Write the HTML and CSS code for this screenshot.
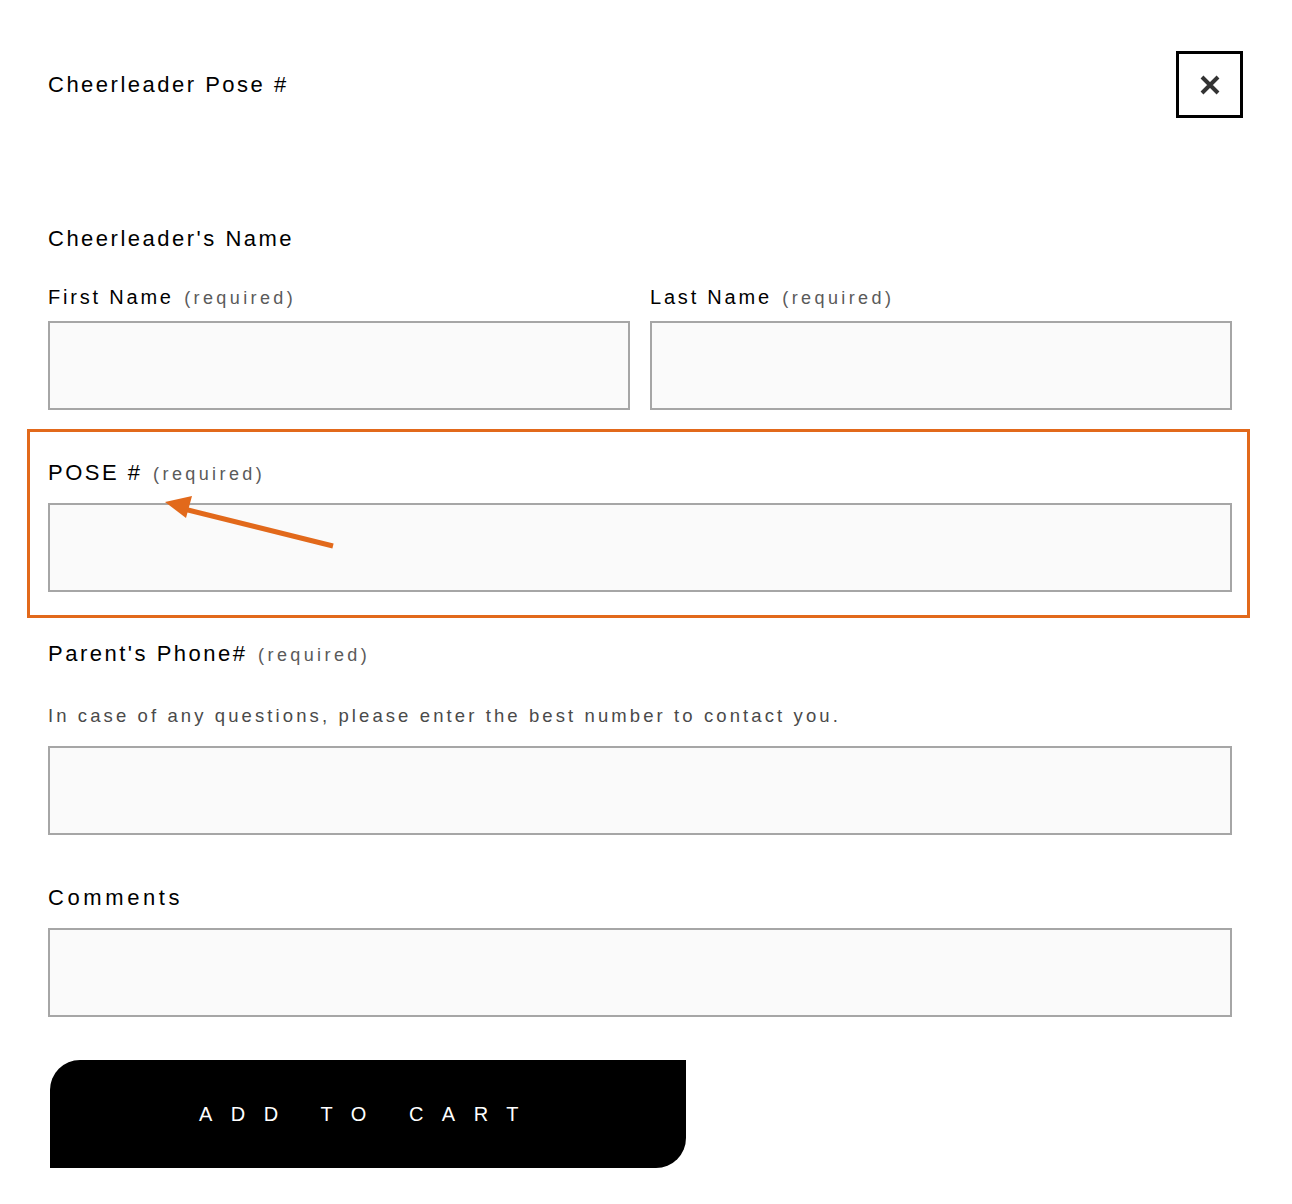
FILE: index.html
```html
<!DOCTYPE html>
<html lang="en">
<head>
  <meta charset="UTF-8">
  <meta name="viewport" content="width=device-width, initial-scale=1.0">
  <title>Cheerleader Pose #</title>
  <link rel="stylesheet" href="styles.css">
</head>
<body>

<div class="modal">

  <!-- Header -->
  <div class="modal-head">
    <h2 class="modal-title">Cheerleader Pose #</h2>
    <button class="close-btn" type="button" aria-label="Close">
      <svg width="20" height="20" viewBox="0 0 20 20">
        <path d="M2 2 L18 18 M18 2 L2 18" stroke="#333" stroke-width="4" stroke-linecap="butt" fill="none"/>
      </svg>
    </button>
  </div>

  <!-- Form -->
  <form class="form">

    <div class="name-group">
      <div class="group-title">Cheerleader's Name</div>
      <div class="name-row">
        <div class="field">
          <label class="label label--small">First Name <span class="req">(required)</span></label>
          <input class="input" type="text">
        </div>
        <div class="field">
          <label class="label label--small">Last Name <span class="req">(required)</span></label>
          <input class="input" type="text">
        </div>
      </div>
    </div>

    <div class="field field--marked">
      <label class="label">POSE # <span class="req">(required)</span></label>
      <input class="input" type="text">
      <div class="highlight"></div>
      <svg class="arrow" width="300" height="100" viewBox="0 0 300 100">
        <line x1="136" y1="50" x2="285" y2="87" stroke="#e2691b" stroke-width="5"/>
        <polygon points="117,43 144,37 138,59" fill="#e2691b"/>
      </svg>
    </div>

    <div class="field">
      <label class="label">Parent's Phone# <span class="req">(required)</span></label>
      <p class="desc">In case of any questions, please enter the best number to contact you.</p>
      <input class="input" type="text">
    </div>

    <div class="field field--last">
      <label class="label label--wide">Comments</label>
      <input class="input" type="text">
    </div>

    <button class="add-btn" type="button">Add to Cart</button>

  </form>
</div>

</body>
</html>
```

FILE: styles.css
```css
/* General */
* {
  box-sizing: border-box;
}
body {
  margin: 0;
  background-color: #fff;
  font-family: "Liberation Sans", Arial, sans-serif;
  color: #000;
}

.modal {
  padding: 0 60px 0 48px;
}

/* Header */
.modal-head {
  display: flex;
  align-items: center;
  justify-content: space-between;
  padding-top: 51px;
  margin-right: -11px;
}

.modal-title {
  margin: 0;
  font-size: 22px;
  font-weight: normal;
  line-height: 28px;
  letter-spacing: 2.5px;
}

.close-btn {
  width: 67px;
  height: 67px;
  border: 3px solid #000;
  background: #fff;
  padding: 0;
  display: flex;
  align-items: center;
  justify-content: center;
}

/* Form */
.form {
  display: block;
}

.name-group {
  margin-top: 107px;
}

.group-title {
  font-size: 22px;
  line-height: 28px;
  letter-spacing: 2.5px;
  margin-bottom: 32px;
}

.name-row {
  display: grid;
  grid-template-columns: 1fr 1fr;
  gap: 20px;
}

.field {
  position: relative;
  margin-top: 48px;
}

.field--marked,
.field--last {
  margin-top: 49px;
}

.name-row .field {
  margin-top: 0;
}

.label {
  display: block;
  font-size: 22px;
  line-height: 28px;
  letter-spacing: 2.5px;
  margin-bottom: 15px;
}

.label--small {
  font-size: 20px;
  line-height: 24px;
  letter-spacing: 2.8px;
  margin-bottom: 11px;
}

.label--wide {
  letter-spacing: 3.6px;
  margin-bottom: 16px;
}

.req {
  margin-left: 2px;
  font-size: 18px;
  color: #5a5a5a;
  letter-spacing: 3.4px;
}

.desc {
  margin: 35px 0 18px;
  font-size: 18.5px;
  line-height: 24px;
  color: #4a4a4a;
  letter-spacing: 3.1px;
}

.input {
  display: block;
  width: 100%;
  height: 89px;
  border: 2px solid #a6a6a6;
  background-color: #fafafa;
  margin: 0;
  padding: 0 16px;
  font: inherit;
}

/* Annotation */
.highlight {
  position: absolute;
  top: -30px;
  left: -21px;
  right: -18px;
  bottom: -26px;
  border: 3px solid #e2691b;
  pointer-events: none;
}

.arrow {
  position: absolute;
  left: 0;
  top: 0;
  overflow: visible;
  pointer-events: none;
}

/* Button */
.add-btn {
  display: flex;
  align-items: center;
  justify-content: center;
  width: 636px;
  height: 108px;
  margin: 43px 0 0 2px;
  border: none;
  background-color: #000;
  color: #fff;
  border-radius: 30px 0 30px 0;
  font-family: "Liberation Sans", Arial, sans-serif;
  font-size: 20px;
  text-transform: uppercase;
  letter-spacing: 18.5px;
  padding: 0;
}
```
